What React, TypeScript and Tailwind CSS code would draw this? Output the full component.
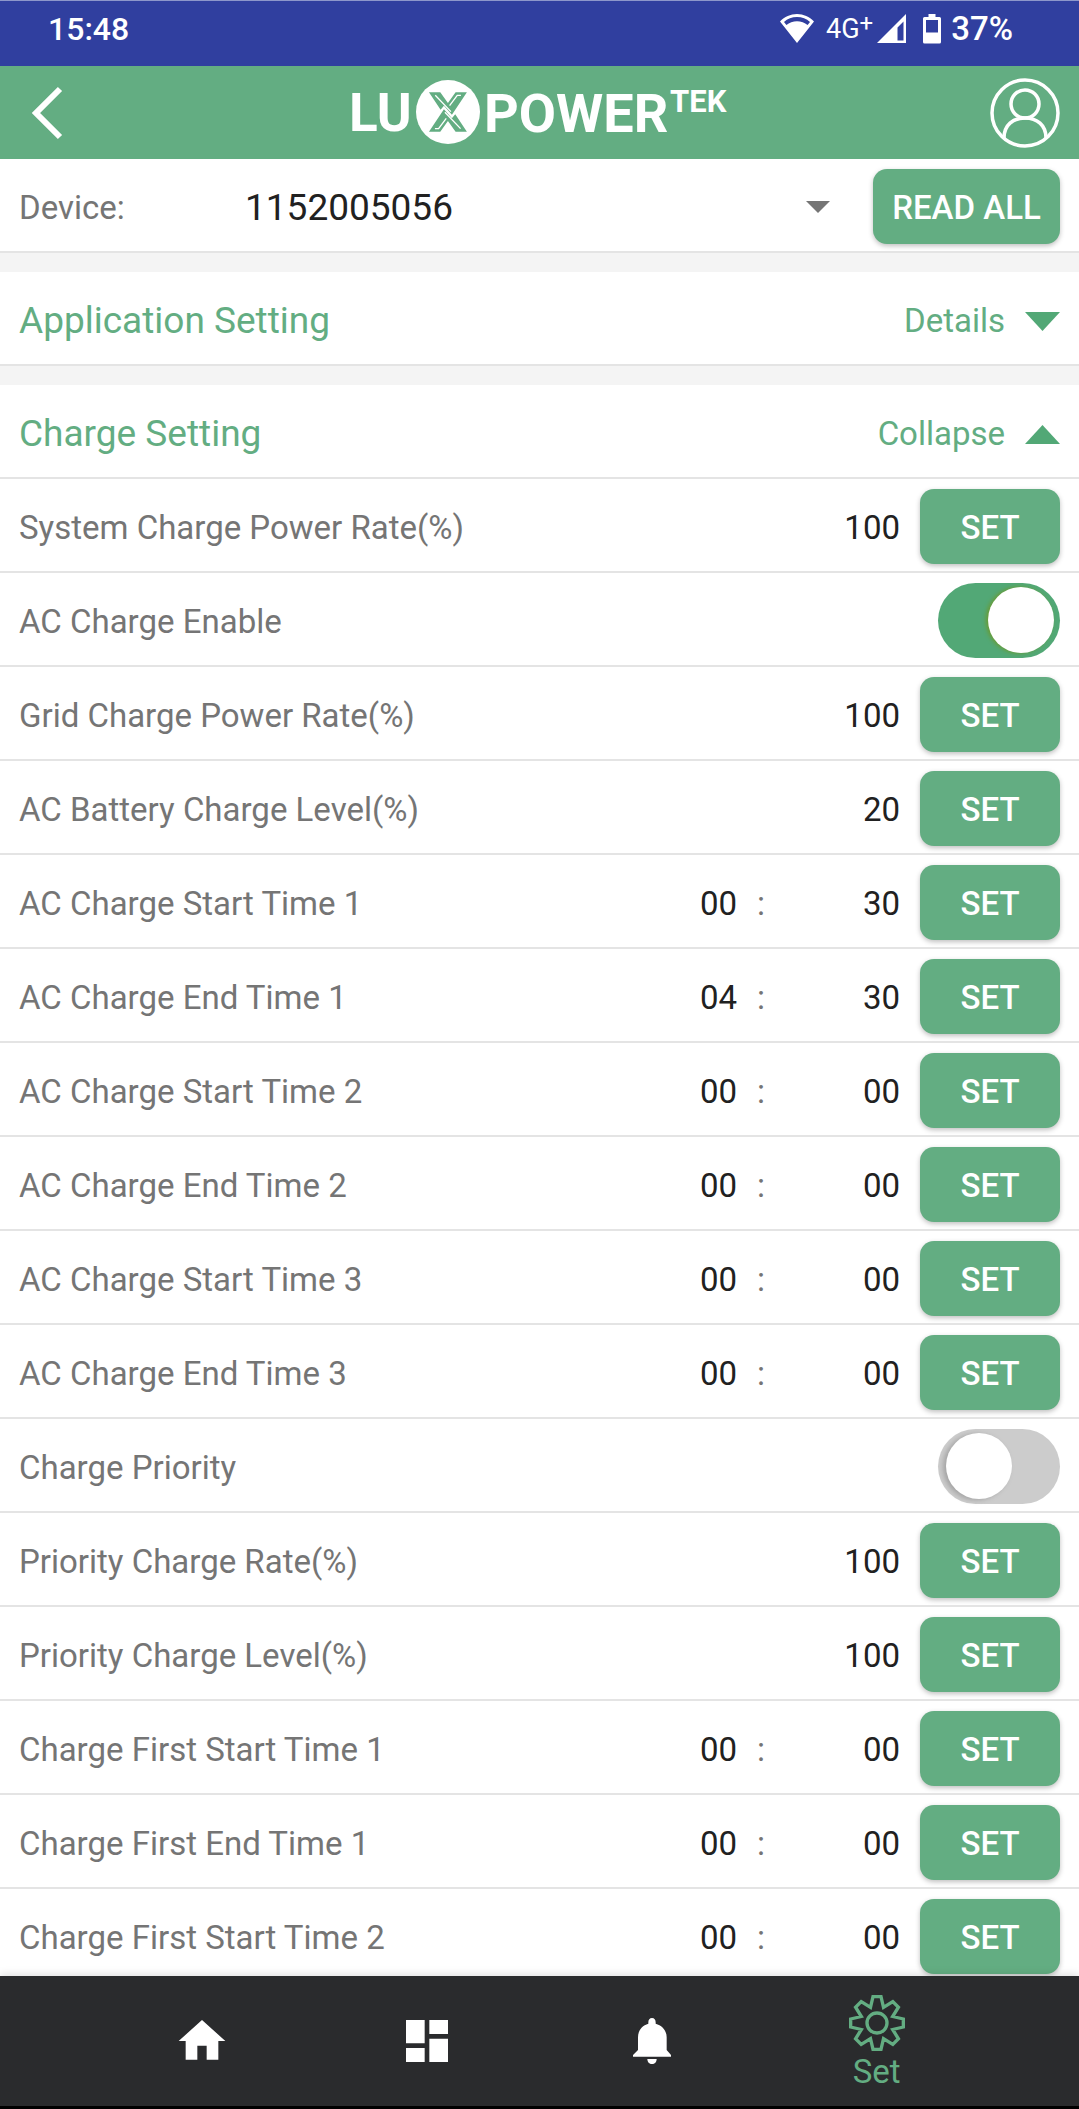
import { useState } from 'react';
import type { ReactNode } from 'react';
import { MdDashboard, MdHome } from 'react-icons/md';

type Row =
    | { kind: 'value'; label: string; value: string }
    | { kind: 'time'; label: string; hour: string; minute: string }
    | { kind: 'toggle'; label: string; on: boolean };

const chargeRows: Row[] = [
    { kind: 'value', label: 'System Charge Power Rate(%)', value: '100' },
    { kind: 'toggle', label: 'AC Charge Enable', on: true },
    { kind: 'value', label: 'Grid Charge Power Rate(%)', value: '100' },
    { kind: 'value', label: 'AC Battery Charge Level(%)', value: '20' },
    { kind: 'time', label: 'AC Charge Start Time 1', hour: '00', minute: '30' },
    { kind: 'time', label: 'AC Charge End Time 1', hour: '04', minute: '30' },
    { kind: 'time', label: 'AC Charge Start Time 2', hour: '00', minute: '00' },
    { kind: 'time', label: 'AC Charge End Time 2', hour: '00', minute: '00' },
    { kind: 'time', label: 'AC Charge Start Time 3', hour: '00', minute: '00' },
    { kind: 'time', label: 'AC Charge End Time 3', hour: '00', minute: '00' },
    { kind: 'toggle', label: 'Charge Priority', on: false },
    { kind: 'value', label: 'Priority Charge Rate(%)', value: '100' },
    { kind: 'value', label: 'Priority Charge Level(%)', value: '100' },
    { kind: 'time', label: 'Charge First Start Time 1', hour: '00', minute: '00' },
    { kind: 'time', label: 'Charge First End Time 1', hour: '00', minute: '00' },
    { kind: 'time', label: 'Charge First Start Time 2', hour: '00', minute: '00' },
];

const StatusBar = () => (
    <div className="flex h-[66px] shrink-0 items-center justify-between border-t border-[#8d97cb] bg-[#303f9f] pr-[66px] pb-[10px] pl-12 text-white">
        <span className="text-[32px] font-medium">15:48</span>
        <div className="flex items-center">
            <svg className="h-[30px] w-[34px]" viewBox="0 0 34 30" fill="currentColor">
                <path d="M17 0C10.500 0 4.600 2.800 0 7.400L17 29 34 7.400C29.400 2.800 23.500 0 17 0ZM17 3C22 3 26.500 4.800 30 7.900L27.600 11C24.700 8.700 21 7.300 17 7.300S9.300 8.700 6.400 11L4 7.900C7.500 4.800 12 3 17 3Z" fillRule="evenodd" />
            </svg>
            <span className="ml-3 flex items-start text-[27px] leading-8">
                4G
                <span className="text-2xl leading-5">+</span>
            </span>
            <svg className="ml-1 h-[30px] w-[30px]" viewBox="0 0 30 30" fill="currentColor">
                <path d="M29 0V29H0ZM26.500 7.500L20.500 13.500V26.500H26.500Z" fillRule="evenodd" />
            </svg>
            <svg className="ml-4 h-[30px] w-[18px]" viewBox="0 0 18 30" fill="currentColor">
                <path d="M5.500 0H12.500V3H16.500Q18 3 18 4.500V28Q18 29.500 16.500 29.500H1.500Q0 29.500 0 28V4.500Q0 3 1.500 3H5.500ZM3 6V18.500H15V6Z" fillRule="evenodd" />
            </svg>
            <span className="ml-[10px] text-[33px] font-medium">37%</span>
        </div>
    </div>
);

const Logo = () => (
    <svg className="h-[68px] w-[386px]" viewBox="-4 0 386 68" fill="#fff" role="img" aria-label="LuxpowerTek">
        <text x="-2" y="52" fontSize="53" fontWeight="700">LU</text>
        <circle cx="97" cy="33" r="32" />
        <g transform="translate(-11.300 -19.300) scale(0.333)">
            <path fill="#63ad82" d="M268 98H302L325 130L348 98H382L337 165L313 138L303 150Z" />
            <path fill="#63ad82" d="M382 216H348L325 184L302 216H268L313 149L337 176L347 164Z" />
            <path fill="none" stroke="#fff" strokeWidth="4" d="M287 107L334 156M364 107H353L330 138M363 207L316 158M286 207H297L320 176" />
        </g>
        <text x="133" y="53" fontSize="54" fontWeight="700">POWER</text>
        <text x="319" y="33" fontSize="31" fontWeight="700">TEK</text>
    </svg>
);

const Header = () => (
    <header className="flex h-[93px] shrink-0 items-center bg-[#63ad82] px-[19px] text-white">
        <div className="flex flex-1">
            <button type="button" aria-label="Back" className="px-3">
                <svg className="h-[54px] w-8" viewBox="0 0 32 54" fill="none" stroke="currentColor" strokeWidth="6">
                    <path d="M29 3L5 27L29 51" />
                </svg>
            </button>
        </div>
        <Logo />
        <div className="flex flex-1 justify-end">
            <button type="button" aria-label="Account">
                <svg className="size-[70px]" viewBox="0 0 70 70" fill="none" stroke="currentColor" strokeWidth="3.500">
                    <circle cx="35" cy="35" r="33" />
                    <circle cx="35" cy="26" r="14" />
                    <path d="M14 60C14 47 23 40 35 40S56 47 56 60" />
                </svg>
            </button>
        </div>
    </header>
);

const rowClass = 'flex shrink-0 items-center border-b-2 border-[#e4e4e4] bg-white px-[19px] pt-[10px] pb-[7px]';

const GreenButton = ({ children, className }: { children: ReactNode; className: string }) => (
    <button
        type="button"
        className={`h-[75px] shrink-0 rounded-[14px] bg-[#63ad82] pt-[2px] text-[33px] font-medium text-white shadow-[0_2px_5px_rgba(0,0,0,0.25)] ${className}`}
    >
        {children}
    </button>
);

const DeviceRow = () => (
    <div className={rowClass}>
        <label htmlFor="device" className="w-[226px] shrink-0 pt-[2px] text-[33px] text-[#757575]">
            Device:
        </label>
        <div className="relative mr-[19px] flex-1">
            <select id="device" className="w-full appearance-none bg-transparent pt-[2px] text-[37px] text-[#212121]">
                <option>1152005056</option>
            </select>
            <svg className="pointer-events-none absolute top-1/2 right-6 h-3 w-6 -translate-y-1/2" viewBox="0 0 24 12" fill="#757575">
                <path d="M0 0H24L12 12Z" />
            </svg>
        </div>
        <GreenButton className="w-[187px]">READ ALL</GreenButton>
    </div>
);

const SectionHeader = ({ title, open, onToggle }: { title: string; open: boolean; onToggle?: () => void }) => (
    <div className={`${rowClass} h-[94px] justify-between text-[#63ad82]`}>
        <h2 className="pt-[3px] text-[37px]">{title}</h2>
        <button type="button" onClick={onToggle} aria-expanded={open} className="flex items-center gap-5 pt-[3px] text-[33px]">
            {open ? 'Collapse' : 'Details'}
            <svg className="h-[19px] w-[35px]" viewBox="0 0 35 19" fill="#52a876">
                {open ? <path d="M17.500 0L35 19H0Z" /> : <path d="M0 0H35L17.500 19Z" />}
            </svg>
        </button>
    </div>
);

const Toggle = ({ id, defaultOn }: { id: string; defaultOn: boolean }) => {
    const [on, setOn] = useState(defaultOn);

    return (
        <span className="relative block h-[75px] w-[122px] shrink-0">
            <input
                id={id}
                type="checkbox"
                role="switch"
                checked={on}
                onChange={(e) => setOn(e.target.checked)}
                className="block h-full w-full cursor-pointer appearance-none rounded-full bg-[#cccccc] checked:bg-[#52a876]"
            />
            <span
                className={`pointer-events-none absolute top-1 size-[66px] rounded-full bg-white ${
                    on ? 'right-[6px] shadow-[-2px_0_4px_0_#6b9a30]' : 'left-2 shadow-[-3px_1px_5px_0_#a3a3a3]'
                }`}
            />
        </span>
    );
};

const inputClass = 'min-w-0 bg-transparent pt-[2px] text-right text-[33px] text-[#212121] outline-none';

const SettingRow = ({ row, id }: { row: Row; id: string }) => (
    <div className={rowClass}>
        <label htmlFor={id} className="flex-1 pt-[2px] text-[33px] text-[#757575]">
            {row.label}
        </label>
        {row.kind === 'value' && <input id={id} type="text" defaultValue={row.value} className={`${inputClass} w-[115px]`} />}
        {row.kind === 'time' && (
            <>
                <input id={id} type="text" defaultValue={row.hour} className={`${inputClass} w-[115px]`} />
                <span className="w-12 pt-[2px] text-center text-[33px] text-[#757575]">:</span>
                <input type="text" aria-label={`${row.label} minutes`} defaultValue={row.minute} className={`${inputClass} w-[115px]`} />
            </>
        )}
        {row.kind === 'toggle' ? <Toggle id={id} defaultOn={row.on} /> : <GreenButton className="ml-5 w-[140px]">SET</GreenButton>}
    </div>
);

const BottomNav = () => (
    <nav className="relative flex h-[133px] shrink-0 items-center border-b-[3px] border-black bg-[#2a2b2d] px-[90px] text-white shadow-[0_-2px_8px_rgba(0,0,0,0.12)]">
        <a href="#home" aria-label="Home" className="flex flex-1 justify-center">
            <MdHome className="size-14" />
        </a>
        <a href="#dashboard" aria-label="Dashboard" className="flex flex-1 justify-center">
            <MdDashboard className="size-14" />
        </a>
        <a href="#alerts" aria-label="Alerts" className="flex flex-1 justify-center">
            <svg className="h-[46px] w-[38px]" viewBox="0 0 114 138" fill="currentColor">
                <path d="M57 0C50 0 46 5 46 13V17C27 22 15 38 15 58V96L0 111V116H114V111L101 96V58C101 38 88 22 68 17V13C68 5 64 0 57 0Z" />
                <path d="M43 123H71C71 132 65 138 57 138S43 132 43 123Z" />
            </svg>
        </a>
        <a href="#set" className="flex flex-1 flex-col items-center pt-[5px] text-[#63ad82]">
            <svg className="size-14" viewBox="-84 -84 168 168" fill="none" stroke="currentColor" strokeWidth="10">
                <path d="M-12 -79H12L19.500 -47L47.400 -64.300L64.300 -47.400L47 -19.500L79 -12V12L47 19.500L64.300 47.400L47.400 64.300L19.500 47L12 79H-12L-19.500 47L-47.400 64.300L-64.300 47.400L-47 19.500L-79 12V-12L-47 -19.500L-64.300 -47.400L-47.400 -64.300L-19.500 -47Z" />
                <circle r="30" />
            </svg>
            <span className="text-[33px] leading-[42px]">Set</span>
        </a>
    </nav>
);

const App = () => {
    const [chargeOpen, setChargeOpen] = useState(true);

    return (
        <div className="flex h-screen flex-col bg-white font-[Roboto,sans-serif]">
            <StatusBar />
            <Header />
            <main className="flex min-h-0 flex-1 flex-col gap-[19px] overflow-hidden bg-[#f4f4f4]">
                <DeviceRow />
                <SectionHeader title="Application Setting" open={false} />
                <section className="shrink-0 bg-white">
                    <SectionHeader title="Charge Setting" open={chargeOpen} onToggle={() => setChargeOpen(!chargeOpen)} />
                    {chargeOpen && chargeRows.map((row, i) => <SettingRow key={row.label} row={row} id={`charge-${i}`} />)}
                </section>
            </main>
            <BottomNav />
        </div>
    );
};

export default App;
